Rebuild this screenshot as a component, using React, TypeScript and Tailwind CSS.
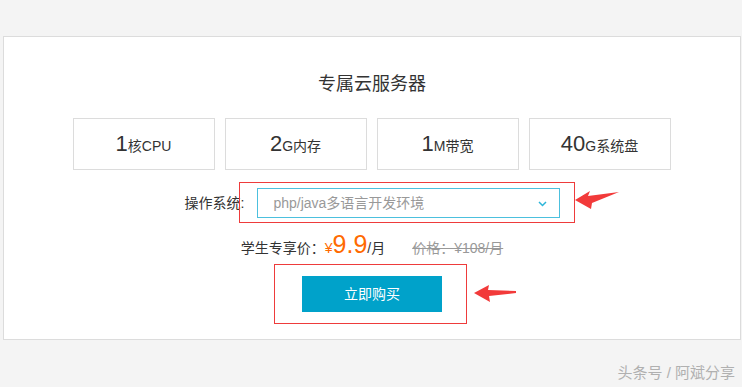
const specs = [
  { num: "1", unit: "核CPU" },
  { num: "2", unit: "G内存" },
  { num: "1", unit: "M带宽" },
  { num: "40", unit: "G系统盘" },
];

function Arrow({ className, d }: { className: string; d: string }) {
  return (
    <svg className={className} viewBox="0 0 46 22">
      <path d={d} fill="#f23a3a" />
    </svg>
  );
}

export default function App() {
  return (
    <div className="relative h-[387px] w-[742px] overflow-hidden bg-[#f4f4f4] pt-9 font-['Liberation_Sans','Noto_Sans_CJK_SC',sans-serif] text-[#333]">
      <div className="ml-[3px] mr-[1px] flex h-[304px] flex-col items-center border border-[#dcdcdc] bg-white">
        <h1 className="pt-[35px] text-[18px] leading-[24px] text-[#333]">专属云服务器</h1>

        {/* spec cards */}
        <div className="mt-[22px] mr-[1px] flex gap-[10px]">
          {specs.map((s, i) => (
            <div
              key={i}
              className="flex h-[52px] w-[142px] items-baseline justify-center border border-[#dcdcdc] pt-[12px]"
            >
              <span className="text-[22px] leading-[26px]">{s.num}</span>
              <span className="text-[14px]">{s.unit}</span>
            </div>
          ))}
        </div>

        {/* os select */}
        <div className="mt-[18px] flex h-[30px] items-center gap-[13px] pl-[1px]">
          <span className="text-[14px]">操作系统:</span>
          <div className="flex h-[30px] w-[303px] items-center justify-between border border-[#4cc0de] pl-[15px] pr-[12px]">
            <span className="text-[14px] text-[#999]">php/java多语言开发环境</span>
            <svg width="9" height="6" viewBox="0 0 9 6" className="mt-[1px]">
              <path d="M1 1l3.5 3.5L8 1" fill="none" stroke="#2bb5d8" strokeWidth="1.5" />
            </svg>
          </div>
        </div>

        {/* price */}
        <div className="mt-[14px] flex h-[24px] items-baseline leading-[24px]">
          <span className="text-[14px]">学生专享价：</span>
          <span className="text-[14px] text-[#ff6a00]">¥</span>
          <span className="text-[25px] text-[#ff6a00]">9.9</span>
          <span className="text-[14px]">/月</span>
          <span className="ml-[27px] text-[14px] text-[#999] line-through">价格：¥108/月</span>
        </div>

        <button className="mt-[20px] h-[36px] w-[140px] bg-[#00a2ca] text-[14px] text-white">立即购买</button>
      </div>

      {/* annotations */}
      <div className="absolute left-[239px] top-[182px] h-[41px] w-[336px] border-[1.5px] border-[#ee3b3b]" />
      <div className="absolute left-[274px] top-[264px] h-[60px] w-[193px] border-[1.5px] border-[#ee3b3b]" />
      <Arrow
        className="absolute left-[574px] top-[189px] h-[22px] w-[46px]"
        d="M1 11 L16 2 L14 7 L45 3 L18 14 L17 20 Z"
      />
      <Arrow
        className="absolute left-[473px] top-[283px] h-[22px] w-[46px]"
        d="M1 10 L16 2 L15 7 L43 8 L43 10 L16 13 L17 19 Z"
      />

      <div className="absolute bottom-[3px] right-[7px] text-[15px] text-[#b0b0b0]">头条号 / 阿斌分享</div>
    </div>
  );
}
